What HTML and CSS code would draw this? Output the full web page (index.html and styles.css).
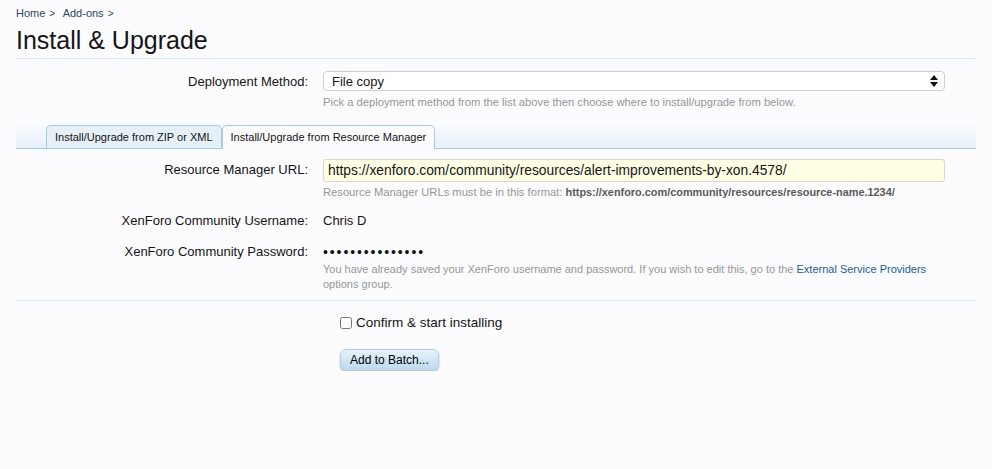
FILE: index.html
```html
<!DOCTYPE html>
<html lang="en">
<head>
  <meta charset="UTF-8" />
  <title>Install &amp; Upgrade</title>
  <link rel="stylesheet" href="styles.css">
</head>
<body>

  <div class="page">
    <nav class="crumbs">
      <a href="#">Home</a><span class="sep">&gt;</span>
      <a href="#">Add-ons</a><span class="sep">&gt;</span>
    </nav>

    <h1 class="title">Install &amp; Upgrade</h1>

    <form class="xform">
      <div class="ctrl-unit top-unit">
        <label class="ctrl-label">Deployment Method:</label>
        <div class="ctrl-field">
          <div class="select">
            <span>File copy</span>
            <svg class="select-arrows" width="8" height="12" viewBox="0 0 8 12">
              <path d="M4 0 L8 5 L0 5 Z M0 7 L8 7 L4 12 Z" fill="#111"/>
            </svg>
          </div>
          <p class="explain">Pick a deployment method from the list above then choose where to install/upgrade from below.</p>
        </div>
      </div>

      <ul class="tabs">
        <li class="tab">Install/Upgrade from ZIP or XML</li>
        <li class="tab active">Install/Upgrade from Resource Manager</li>
      </ul>

      <div class="ctrl-unit">
        <label class="ctrl-label">Resource Manager URL:</label>
        <div class="ctrl-field">
          <div class="textbox">https://xenforo.com/community/resources/alert-improvements-by-xon.4578/</div>
          <p class="explain">Resource Manager URLs must be in this format: <b>https://xenforo.com/community/resources/resource-name.1234/</b></p>
        </div>
      </div>

      <div class="ctrl-unit">
        <label class="ctrl-label">XenForo Community Username:</label>
        <div class="ctrl-field plain">Chris D</div>
      </div>

      <div class="ctrl-unit">
        <label class="ctrl-label">XenForo Community Password:</label>
        <div class="ctrl-field">
          <div class="plain dots">&bull;&bull;&bull;&bull;&bull;&bull;&bull;&bull;&bull;&bull;&bull;&bull;&bull;&bull;&bull;</div>
          <p class="explain flush">You have already saved your XenForo username and password. If you wish to edit this, go to the <a href="#">External Service Providers</a> options group.</p>
        </div>
      </div>

      <div class="submit-unit">
        <label class="check"><input type="checkbox" /> Confirm &amp; start installing</label>
        <button type="button" class="button">Add to Batch...</button>
      </div>
    </form>
  </div>

</body>
</html>
```

FILE: styles.css
```css
body {
  margin: 0;
  background: #fcfcff;
  color: #141414;
  font-family: 'Liberation Sans', Arial, sans-serif;
  font-size: 13px;
}

a {
  color: #176093;
  text-decoration: none;
}

.page {
  padding: 0 16px;
}

.crumbs {
  padding-top: 6px;
  font-size: 11px;
  line-height: 14px;
}

.crumbs a {
  color: #2b485c;
}

.crumbs .sep {
  margin: 0 5px 0 4px;
  color: #2b485c;
  font-size: 10px;
}

.title {
  margin: 5px 0 0;
  padding-bottom: 3px;
  font-size: 25px;
  font-weight: normal;
  line-height: 29px;
  border-bottom: 1px solid #d7e7f3;
}

.ctrl-unit {
  display: grid;
  grid-template-columns: 292px 622px;
  column-gap: 15px;
  margin-top: 10px;
}

.top-unit {
  margin-top: 12px;
}

.ctrl-label {
  text-align: right;
  line-height: 20px;
  padding-top: 1px;
}

.ctrl-field.plain,
.plain {
  line-height: 20px;
  padding-top: 1px;
}

.dots {
  font-size: 14px;
  letter-spacing: 1.9px;
}

.explain {
  margin: 3px 0 0;
  color: #969696;
  font-size: 11.2px;
  line-height: 15px;
}

.top-unit .explain {
  margin-top: 4px;
}

.explain.flush {
  margin-top: 0;
  font-size: 11px;
}

.explain b {
  color: #5a5a5a;
  font-size: 10.9px;
}

.select {
  display: flex;
  justify-content: space-between;
  align-items: center;
  height: 18px;
  padding: 0 6px 0 8px;
  border: 1px solid #cfcfcf;
  border-radius: 4px;
  background: #fff;
}

.textbox {
  height: 21px;
  line-height: 21px;
  padding: 0 4px;
  font-size: 13.8px;
  border: 1px solid #d8d8c8;
  border-radius: 3px;
  background: #ffffe6;
}

.tabs {
  display: flex;
  list-style: none;
  margin: 12px 0 0;
  padding: 3px 0 0 30px;
  border-bottom: 1px solid #a5cae4;
  background: linear-gradient(to bottom, #fcfcff, #e6f0f8);
}

.tab {
  padding: 0 8px;
  height: 22px;
  line-height: 22px;
  font-size: 11px;
  border: 1px solid #a5cae4;
  border-bottom: none;
  border-radius: 5px 5px 0 0;
  background: #e5f0f8;
}

.tab.active {
  background: #fcfcff;
  margin-bottom: -1px;
  height: 23px;
}

.submit-unit {
  margin-top: 8px;
  padding: 14px 0 0 324px;
  border-top: 1px solid #d7e7f3;
}

.check {
  display: flex;
  align-items: center;
  gap: 4px;
  font-size: 13.5px;
}

.check input {
  margin: 0;
  width: 12px;
  height: 12px;
}

.button {
  display: block;
  margin-top: 19px;
  padding: 0 9px;
  height: 22px;
  font-family: inherit;
  font-size: 12px;
  color: #000;
  border: 1px solid #b3cfe6;
  border-radius: 6px;
  background: linear-gradient(to bottom, #e8f2fa, #bcd8ee);
  box-shadow: 0 1px 2px rgba(0,0,0,0.3);
}
```
